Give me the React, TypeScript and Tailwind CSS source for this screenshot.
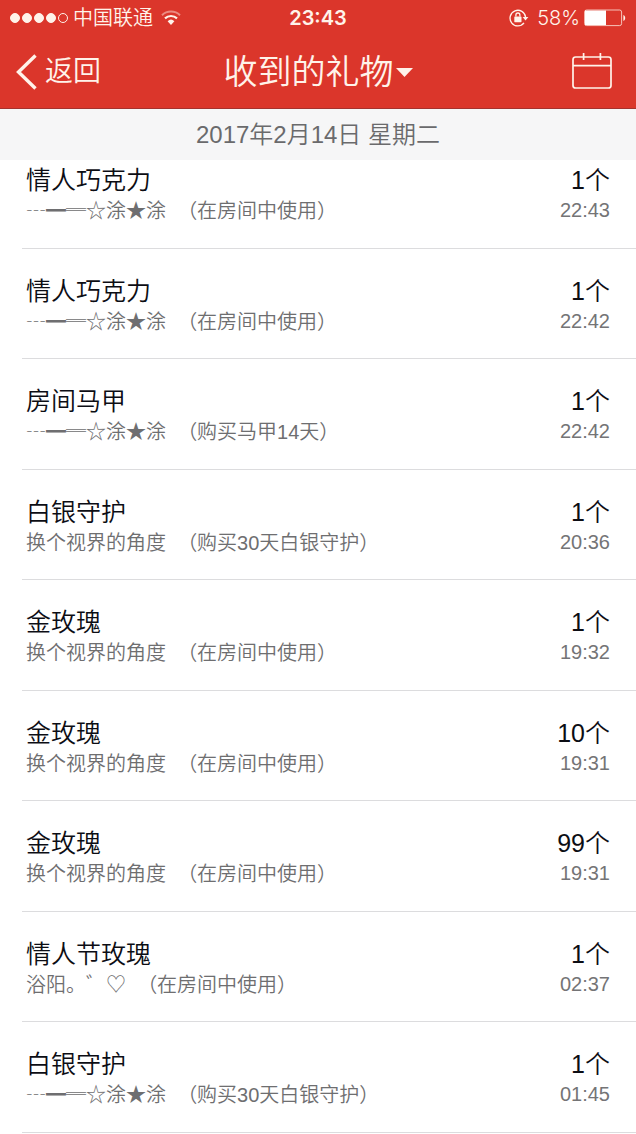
import { clsx } from "clsx";

type Gift = {
  name: string;
  sender: string;
  note: string;
  count: number;
  time: string;
};

const GIFTS: Gift[] = [
  { name: "情人巧克力", sender: "┄━═☆涂★涂", note: "（在房间中使用）", count: 1, time: "22:43" },
  { name: "情人巧克力", sender: "┄━═☆涂★涂", note: "（在房间中使用）", count: 1, time: "22:42" },
  { name: "房间马甲", sender: "┄━═☆涂★涂", note: "（购买马甲14天）", count: 1, time: "22:42" },
  { name: "白银守护", sender: "换个视界的角度", note: "（购买30天白银守护）", count: 1, time: "20:36" },
  { name: "金玫瑰", sender: "换个视界的角度", note: "（在房间中使用）", count: 1, time: "19:32" },
  { name: "金玫瑰", sender: "换个视界的角度", note: "（在房间中使用）", count: 10, time: "19:31" },
  { name: "金玫瑰", sender: "换个视界的角度", note: "（在房间中使用）", count: 99, time: "19:31" },
  { name: "情人节玫瑰", sender: "浴阳。゛♡", note: "（在房间中使用）", count: 1, time: "02:37" },
  { name: "白银守护", sender: "┄━═☆涂★涂", note: "（购买30天白银守护）", count: 1, time: "01:45" },
];

function WifiIcon() {
  return (
    <svg width="20" height="16" viewBox="0 0 20 16" fill="none" aria-hidden="true">
      <path d="M1 5.2C6 .4 14 .4 19 5.2" stroke="currentColor" strokeWidth="2" opacity="0.45" />
      <path d="M4 8.4C7.4 5.2 12.6 5.2 16 8.4" stroke="currentColor" strokeWidth="2.2" />
      <path d="M6.6 11.2a5 5 0 0 1 6.8 0L10 15z" fill="currentColor" />
    </svg>
  );
}

function RotationLockIcon() {
  return (
    <svg width="20" height="18" viewBox="0 0 20 18" fill="none" stroke="currentColor" aria-hidden="true">
      <path d="M15 13.9A7.8 7.8 0 1 1 16.600 8.200" strokeWidth="1.300" />
      <path d="M13.600 8h5.800l-2.900 3.400z" fill="currentColor" stroke="none" />
      <rect x="5.300" y="7.400" width="7.200" height="5.800" rx="0.600" fill="currentColor" stroke="none" />
      <path d="M6.900 7.600V6a2 2 0 0 1 4 0v1.600" strokeWidth="1.300" />
    </svg>
  );
}

function BatteryIcon() {
  return (
    <svg width="42" height="18" viewBox="0 0 42 18" fill="none" aria-hidden="true">
      <rect x="0.6" y="1" width="37" height="15.6" rx="2" stroke="currentColor" strokeWidth="1" opacity="0.75" />
      <path d="M1 1.5h21v14.6H1z" fill="#fff" />
      <path d="M39.4 6c2.4 1 2.4 5 0 6z" fill="currentColor" />
    </svg>
  );
}

function CalendarIcon() {
  return (
    <svg width="40" height="38" viewBox="0 0 40 38" fill="none" stroke="currentColor" strokeWidth="1.7" aria-hidden="true">
      <rect x="1" y="4" width="38" height="31" rx="2.6" />
      <path d="M1 12.6h38M11.6 0v7M28.4 0v7" />
    </svg>
  );
}

function StatusBar() {
  return (
    <div className="grid h-9 grid-cols-3 items-center px-[10px] text-xl leading-5">
      <div className="flex items-center gap-2">
        <div className="flex items-center gap-[5px]">
          <div className="flex items-center gap-[2px]">
            {[1, 2, 3, 4, 5].map((n) => (
              <span
                key={n}
                className={clsx("h-[10px] w-[10px] rounded-full border border-current", n < 5 && "bg-current")}
              />
            ))}
          </div>
          <span className="whitespace-nowrap">中国联通</span>
        </div>
        <WifiIcon />
      </div>
      <time className="text-center font-['Inter'] font-semibold">23:43</time>
      <div className="flex items-center justify-end gap-1">
        <RotationLockIcon />
        <span className="pl-1 font-['Inter']">58%</span>
        <BatteryIcon />
      </div>
    </div>
  );
}

function NavBar() {
  return (
    <nav className="grid h-[72px] grid-cols-[1fr_auto_1fr] items-center px-4">
      <button type="button" className="flex items-center gap-2 text-[28px] leading-9">
        <svg width="21" height="36" viewBox="0 0 21 36" fill="none" stroke="currentColor" strokeWidth="3.4" aria-hidden="true">
          <path d="M19.5 1.5 2.5 18l17 16.5" />
        </svg>
        返回
      </button>
      <button type="button" className="flex items-center gap-[2px] text-[34px] leading-10">
        收到的礼物
        <svg width="17" height="9" viewBox="0 0 17 9" fill="currentColor" aria-hidden="true">
          <path d="M0 0h17L8.5 9z" />
        </svg>
      </button>
      <button type="button" aria-label="日历" className="mr-2 justify-self-end">
        <CalendarIcon />
      </button>
    </nav>
  );
}

function GiftRow({ gift }: { gift: Gift }) {
  return (
    <li className="flex justify-between border-b border-[#dcdcde] pt-[26px] pr-[26px] pb-[22px] pl-1 first:pt-1 odd:pb-[23px]">
      <div>
        <h2 className="text-[25px] leading-8 text-[#0c0d14]">{gift.name}</h2>
        <p className="text-xl leading-7 whitespace-pre text-[#6e6e70]">
          <span className="font-['Noto_Sans_CJK_SC',sans-serif]">{gift.sender}</span>
          {"  "}
          {gift.note}
        </p>
      </div>
      <div className="text-right">
        <p className="text-[25px] leading-8 text-[#0c0d14]">{gift.count}个</p>
        <time className="block text-xl leading-7 text-[#747476]">{gift.time}</time>
      </div>
    </li>
  );
}

export default function App() {
  return (
    <div className="min-h-screen bg-white font-['Liberation_Sans','Noto_Sans_CJK_SC',sans-serif] font-[350]">
      <header className="border-b border-[#a5322e] bg-[#db362b] text-[#fff3ea]">
        <StatusBar />
        <NavBar />
      </header>
      <main>
        <h1 className="bg-[#f6f6f7] py-[9px] text-center text-2xl leading-[33px] text-[#6a6a6c]">
          2017年2月14日 星期二
        </h1>
        <ul className="pl-[22px]">
          {GIFTS.map((gift, i) => (
            <GiftRow key={i} gift={gift} />
          ))}
        </ul>
      </main>
    </div>
  );
}
